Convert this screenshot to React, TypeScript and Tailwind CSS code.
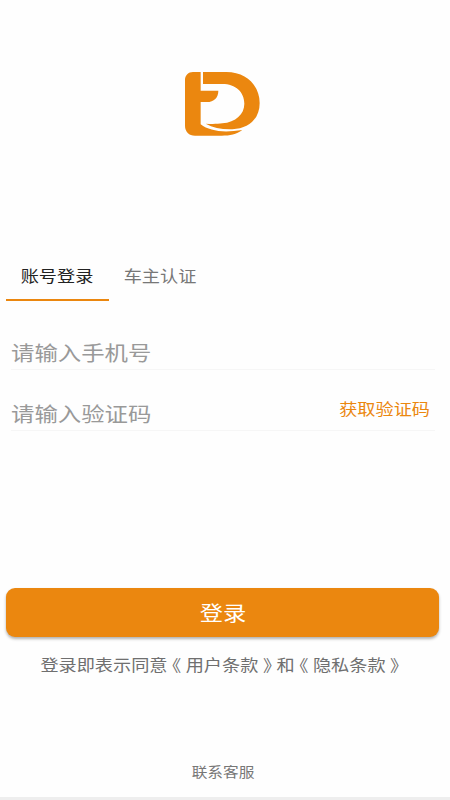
import { useState } from 'react'
import clsx from 'clsx'

const TABS = ['账号登录', '车主认证']

function Logo() {
  return (
    <svg
      viewBox="0 0 285 255"
      className="h-[85px] w-[95px] fill-[#eb870f]"
      aria-hidden="true"
    >
      <path d="M54 30H77V86H130C130 107 117 120 96 120H77V187C104 208 146 213 202 204C184 217 165 221 140 221H60C42 221 30 209 30 191V54C30 40 40 30 54 30Z" />
      <path d="M84 30H154C215 30 254 72 254 123C254 170 222 200 172 202C140 203 114 197 92 185C108 186 128 186 142 184C182 180 208 157 208 125C208 90 182 66 142 66H84Z" />
    </svg>
  )
}

interface FieldProps {
  name: string
  placeholder: string
  children?: React.ReactNode
}

function Field({ name, placeholder, children }: FieldProps) {
  return (
    <div className="flex h-[61px] items-end justify-between border-b border-[#f6f6f6]">
      <input
        name={name}
        placeholder={placeholder}
        className="mb-[1px] h-8 w-[180px] origin-left scale-x-[1.17] text-[20px] text-[#222] outline-none placeholder:text-[#999]"
      />
      {children}
    </div>
  )
}

// Guillemets centred in a full-width cell
function Mark({ children }: { children: string }) {
  return (
    <span className="px-1 [font-feature-settings:'halt']">{children}</span>
  )
}

export default function App() {
  const [active, setActive] = useState(0)

  return (
    <div className="flex h-[800px] w-[450px] flex-col overflow-hidden border-b-[3px] border-[#eee] bg-[#fefefe] font-['Noto_Sans_CJK_SC',sans-serif]">
      <div className="mt-[62px] flex h-[85px] pl-[175px]">
        <Logo />
      </div>

      <div className="mt-[107px] flex pl-1.5">
        {TABS.map((tab, i) => (
          <button
            key={tab}
            type="button"
            onClick={() => setActive(i)}
            className={clsx(
              'flex h-[47px] w-[103px] justify-center border-b-2 pt-[9px] text-base leading-6',
              i === active
                ? 'border-[#eb870f] text-[#222]'
                : 'border-transparent text-[#777]',
            )}
          >
            <span className="scale-x-[1.135]">{tab}</span>
          </button>
        ))}
      </div>

      <div className="mt-[8px] pr-[15px] pl-[11px]">
        <Field name="phone" placeholder="请输入手机号" />
        <Field name="code" placeholder="请输入验证码">
          <button
            type="button"
            className="mr-[5px] mb-[10px] origin-right scale-x-[1.135] text-base leading-6 text-[#eb870f]"
          >
            获取验证码
          </button>
        </Field>
      </div>

      <button
        type="button"
        className="mt-[157px] mr-[11px] ml-1.5 flex h-[49px] shrink-0 items-center justify-center rounded-[9px] bg-[#eb870f] text-[20px] text-white shadow-[0_2px_3px_rgba(0,0,0,0.3)]"
      >
        <span className="scale-x-[1.165]">登录</span>
      </button>

      <p className="mt-[15px] mr-[5px] text-center text-base leading-6 whitespace-nowrap text-[#6f6f6f]">
        <span className="inline-block scale-x-[1.135]">
          登录即表示同意<Mark>《</Mark>用户条款<Mark>》</Mark>和
          <Mark>《</Mark>隐私条款<Mark>》</Mark>
        </span>
      </p>

      <div className="mt-auto mb-[16px] flex justify-center pr-[5px] text-[13.5px] leading-5 text-[#777]">
        <button type="button" className="scale-x-[1.16]">
          联系客服
        </button>
      </div>
    </div>
  )
}
